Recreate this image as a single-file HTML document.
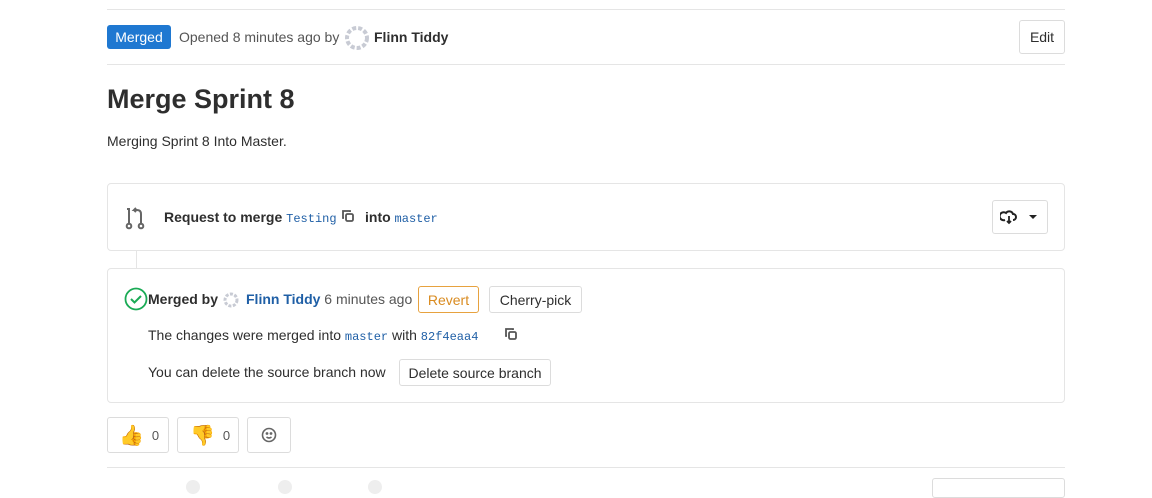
<!DOCTYPE html>
<html><head><style>
*{box-sizing:border-box;margin:0;padding:0}
body{width:1152px;height:483px;background:#fff;font-family:"Liberation Sans",sans-serif;color:#2e2e2e;position:relative;overflow:hidden;font-size:14px}
.a{position:absolute}
.hr{position:absolute;left:107px;width:958px;height:1px;background:#e5e5e5}
.btn{position:absolute;border:1px solid #dcdcdc;border-radius:3px;background:#fff;display:flex;align-items:center;justify-content:center;font-size:14px;color:#2e2e2e}
.box{position:absolute;left:107px;width:958px;border:1px solid #e5e5e5;border-radius:4px}
.mono{font-family:"Liberation Mono",monospace;color:#1f5fa6;font-size:12px}
.t{white-space:nowrap}
</style></head><body>
<div class="hr" style="top:9px"></div>
<div class="a" style="left:107px;top:25px;width:64px;height:24px;background:#1f78d1;border-radius:3px;color:#fff;font-size:14px;text-align:center;line-height:24px">Merged</div>
<div class="a t" style="left:179px;top:29px;color:#555">Opened 8 minutes ago by</div>
<svg class="a" style="left:345px;top:26px" width="24" height="24"><circle cx="12" cy="12" r="10" fill="none" stroke="#c8cbd4" stroke-width="4" stroke-dasharray="4 2"/></svg>
<div class="a t" style="left:374px;top:29px;font-weight:bold">Flinn Tiddy</div>
<div class="btn" style="left:1019px;top:20px;width:46px;height:34px">Edit</div>
<div class="hr" style="top:64px"></div>
<div class="a t" style="left:107px;top:84px;font-size:27px;font-weight:bold;color:#2e2e2e">Merge Sprint 8</div>
<div class="a t" style="left:107px;top:133px">Merging Sprint 8 Into Master.</div>

<div class="box" style="top:183px;height:68px"></div>
<svg class="a" style="left:125px;top:206px" width="22" height="24" fill="none" stroke="#666" stroke-width="2"><circle cx="4" cy="20" r="2.3"/><circle cx="16" cy="20" r="2.3"/><path d="M4 17V4M2 3h3M16 17V8q0-4-4-4H9l2-2M9 4l2 2"/></svg>
<div class="a t" style="left:164px;top:209px;font-weight:bold">Request to merge <span class="mono" style="font-weight:normal">Testing</span></div>
<svg class="a" style="left:341px;top:209px" width="14" height="14" fill="none" stroke="#555" stroke-width="1.8"><rect x="5" y="5" width="7" height="7" rx="1.5"/><path d="M3 9H2V2h7v1"/></svg>
<div class="a t" style="left:365px;top:209px;font-weight:bold">into <span class="mono" style="font-weight:normal">master</span></div>
<div class="btn" style="left:992px;top:200px;width:56px;height:34px">
<svg width="40" height="16"><path d="M5 11a4 4 0 1 1 1-7 4 4 0 0 1 7 1 3 3 0 0 1 0 6" fill="none" stroke="#222" stroke-width="2"/><path d="M9 7v7M7 12l2 2 2-2" stroke="#222" stroke-width="1.8" fill="none"/><path d="M33 6h8l-4 4z" fill="#222" transform="translate(-4,0)"/></svg></div>
<div class="a" style="left:136px;top:251px;width:1px;height:17px;background:#e5e5e5"></div>

<div class="box" style="top:268px;height:135px"></div>
<svg class="a" style="left:124px;top:287px" width="24" height="24"><circle cx="12" cy="12" r="10.5" fill="none" stroke="#1aaa55" stroke-width="1.8"/><path d="M7 12l3.5 3.5L17 9" fill="none" stroke="#1aaa55" stroke-width="2"/></svg>
<div class="a t" style="left:148px;top:291px;font-weight:bold">Merged by</div>
<svg class="a" style="left:223px;top:292px" width="16" height="16"><circle cx="8" cy="8" r="6" fill="none" stroke="#c8cbd4" stroke-width="3" stroke-dasharray="3 1.5"/></svg>
<div class="a t" style="left:246px;top:291px"><span style="color:#1f5fa6;font-weight:bold">Flinn Tiddy</span> <span style="color:#555">6 minutes ago</span></div>
<div class="btn" style="left:418px;top:286px;width:61px;height:27px;border-color:#e7a23f;color:#d98b20">Revert</div>
<div class="btn" style="left:489px;top:286px;width:93px;height:27px">Cherry-pick</div>
<div class="a t" style="left:148px;top:327px">The changes were merged into <span class="mono">master</span> with <span class="mono">82f4eaa4</span></div>
<svg class="a" style="left:504px;top:327px" width="14" height="14" fill="none" stroke="#555" stroke-width="1.8"><rect x="5" y="5" width="7" height="7" rx="1.5"/><path d="M3 9H2V2h7v1"/></svg>
<div class="a t" style="left:148px;top:364px">You can delete the source branch now</div>
<div class="btn" style="left:399px;top:359px;width:152px;height:27px">Delete source branch</div>

<div class="btn" style="left:107px;top:417px;width:62px;height:36px;justify-content:flex-start;padding-left:11px"><span style="font-size:20px;color:#f0b429">👍</span><span style="font-size:13px;color:#555;margin-left:8px">0</span></div>
<div class="btn" style="left:177px;top:417px;width:62px;height:36px;justify-content:flex-start;padding-left:12px"><span style="font-size:20px;color:#f0b429">👎</span><span style="font-size:13px;color:#555;margin-left:8px">0</span></div>
<div class="btn" style="left:247px;top:417px;width:44px;height:36px"><svg width="16" height="16" fill="none" stroke="#666" stroke-width="1.6"><circle cx="8" cy="8" r="6.5"/><circle cx="6" cy="6.5" r=".6" fill="#666"/><circle cx="10" cy="6.5" r=".6" fill="#666"/><path d="M5.5 10q2.5 2 5 0"/></svg></div>
<div class="hr" style="top:467px"></div>
<div class="a" style="left:932px;top:478px;width:133px;height:20px;border:1px solid #dcdcdc;border-radius:3px"></div>
<div class="a" style="left:186px;top:480px;width:14px;height:14px;border-radius:50%;background:#eee"></div>
<div class="a" style="left:278px;top:480px;width:14px;height:14px;border-radius:50%;background:#eee"></div>
<div class="a" style="left:368px;top:480px;width:14px;height:14px;border-radius:50%;background:#eee"></div>
</body></html>
